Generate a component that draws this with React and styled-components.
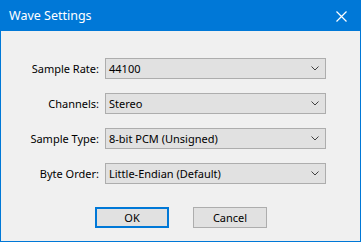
import React from "react";
import styled, { createGlobalStyle } from "styled-components";

const Global = createGlobalStyle`
  html, body { margin: 0; padding: 0; background: #f0f0f0; }
  * { box-sizing: border-box; }
`;

const Window = styled.div`
  width: 361px;
  height: 242px;
  border: 1px solid #0078d7;
  background: #f0f0f0;
  display: flex;
  flex-direction: column;
  font-family: "Noto Sans", "Open Sans", sans-serif;
`;

const TitleBar = styled.div`
  height: 30px;
  background: #0078d7;
  color: #ffffff;
  display: flex;
  align-items: center;
  justify-content: space-between;
  padding: 0 9px 0 8px;
  font-size: 12.5px;
`;

const Title = styled.span`
  margin-top: -1px;
`;

const Close = styled.button`
  all: unset;
  width: 12px;
  height: 12px;
  display: flex;
  align-items: center;
  justify-content: center;
  margin-right: 4px;
`;

const Body = styled.div`
  flex: 1;
  display: flex;
  flex-direction: column;
  padding-top: 27px;
`;

const Form = styled.div`
  display: grid;
  grid-template-columns: 98px 221px;
  column-gap: 6px;
  row-gap: 14px;
`;

const Label = styled.label`
  font-size: 11px;
  color: #000;
  text-align: right;
  line-height: 21px;
  white-space: nowrap;
`;

const Select = styled.div`
  height: 21px;
  background: #e1e1e1;
  border: 1px solid #adadad;
  display: flex;
  align-items: center;
  justify-content: space-between;
  padding: 0 6px 0 3px;
  font-size: 11px;
  color: #000;
`;

const Buttons = styled.div`
  display: flex;
  justify-content: center;
  gap: 24px;
  margin-top: 23px;
  padding-left: 1px;
`;

const Button = styled.button`
  width: 74px;
  height: 21px;
  background: #e1e1e1;
  border: ${(p) => (p.$default ? "2px solid #0078d7" : "1px solid #adadad")};
  font-family: inherit;
  font-size: 11px;
  color: #000;
  padding: 0;
  display: flex;
  align-items: center;
  justify-content: center;
`;

const Chevron = () => (
  <svg width="8" height="5" viewBox="0 0 8 5">
    <path d="M0.5 0.5 L4 4 L7.5 0.5" fill="none" stroke="#404040" strokeWidth="1" />
  </svg>
);

const rows = [
  ["Sample Rate:", "44100"],
  ["Channels:", "Stereo"],
  ["Sample Type:", "8-bit PCM (Unsigned)"],
  ["Byte Order:", "Little-Endian (Default)"],
];

export default function App() {
  return (
    <>
      <Global />
      <Window>
        <TitleBar>
          <Title>Wave Settings</Title>
          <Close aria-label="Close">
            <svg width="11" height="11" viewBox="0 0 11 11">
              <path d="M0.5 0.5 L10.5 10.5 M10.5 0.5 L0.5 10.5" stroke="#fff" strokeWidth="1.2" />
            </svg>
          </Close>
        </TitleBar>
        <Body>
          <Form>
            {rows.map(([l, v]) => (
              <React.Fragment key={l}>
                <Label>{l}</Label>
                <Select>
                  <span>{v}</span>
                  <Chevron />
                </Select>
              </React.Fragment>
            ))}
          </Form>
          <Buttons>
            <Button $default>OK</Button>
            <Button>Cancel</Button>
          </Buttons>
        </Body>
      </Window>
    </>
  );
}
